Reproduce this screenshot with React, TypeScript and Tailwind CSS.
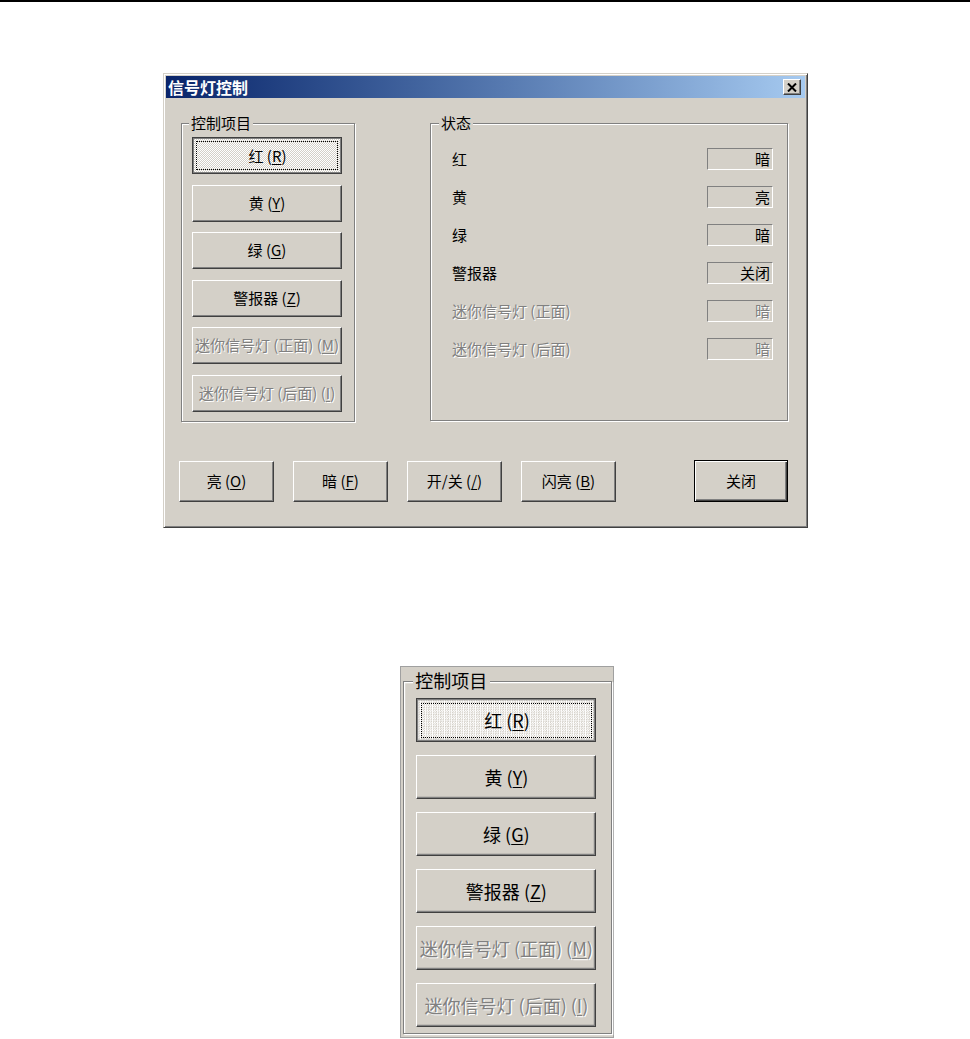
import React from 'react';

// Windows 2000 style bevels
const raised =
  'border border-t-white border-l-white border-r-[#404040] border-b-[#404040] shadow-[inset_-1px_-1px_0_#808080] bg-[#d4d0c8]';
const pressed =
  'border border-[#404040] shadow-[inset_0_0_0_1px_#808080] bg-[repeating-conic-gradient(#ffffff_0_25%,#d4d0c8_0_50%)] bg-[length:2px_2px] p-[3px]';
const defaultBtn =
  'border border-black shadow-[inset_1px_1px_0_#fff,inset_-1px_-1px_0_#404040,inset_-2px_-2px_0_#808080] bg-[#d4d0c8]';
const sunken = 'border border-t-[#808080] border-l-[#808080] border-r-white border-b-white';
const etched = 'relative border border-[#808080] shadow-[inset_1px_1px_0_#fff,1px_1px_0_#fff]';
const grayText = 'text-[#808080] [text-shadow:1px_1px_0_#fff]';

const controls = [
  { text: '红', hot: 'R', down: true },
  { text: '黄', hot: 'Y' },
  { text: '绿', hot: 'G' },
  { text: '警报器', hot: 'Z' },
  { text: '迷你信号灯 (正面)', hot: 'M', disabled: true },
  { text: '迷你信号灯 (后面)', hot: 'I', disabled: true },
];

const status = [
  { name: '红', value: '暗' },
  { name: '黄', value: '亮' },
  { name: '绿', value: '暗' },
  { name: '警报器', value: '关闭' },
  { name: '迷你信号灯 (正面)', value: '暗', disabled: true },
  { name: '迷你信号灯 (后面)', value: '暗', disabled: true },
];

const actions = [
  { text: '亮', hot: 'O' },
  { text: '暗', hot: 'F' },
  { text: '开/关', hot: '/' },
  { text: '闪亮', hot: 'B' },
];

function Label({ text, hot }: { text: string; hot?: string }) {
  return (
    <span className="whitespace-nowrap">
      {text}
      {hot && (
        <>
          {' ('}
          <span className="underline underline-offset-[2px]">{hot}</span>)
        </>
      )}
    </span>
  );
}

function ControlGroup({ height }: { height: string }) {
  return (
    <div className={`${etched} w-[174px] ${height} pt-[13px] pl-[10px]`}>
      <span className="absolute left-[7px] -top-[10px] px-[2px] bg-[#d4d0c8] leading-[18px]">控制项目</span>
      <div className="flex flex-col gap-[10.5px]">
        {controls.map((c) =>
          c.down ? (
            <div key={c.hot} className={`w-[150px] h-[37px] flex ${pressed}`}>
              <div className="flex-1 flex items-center justify-center border border-dotted border-black pt-[1px] pl-[1px]">
                <Label text={c.text} hot={c.hot} />
              </div>
            </div>
          ) : (
            <div
              key={c.hot}
              className={`w-[150px] h-[37px] flex items-center justify-center ${raised} ${c.disabled ? grayText : ''}`}
            >
              <Label text={c.text} hot={c.hot} />
            </div>
          )
        )}
      </div>
    </div>
  );
}

function StatusGroup() {
  return (
    <div className={`${etched} w-[358px] h-[298px] pt-[24px] pl-[21px] pr-[14px]`}>
      <span className="absolute left-[8px] -top-[10px] px-[2px] bg-[#d4d0c8] leading-[18px]">状态</span>
      <div className="flex flex-col gap-[16px]">
        {status.map((s) => (
          <div key={s.name} className="flex items-center justify-between h-[22px]">
            <span className={s.disabled ? grayText : ''}>{s.name}</span>
            <div className={`w-[66px] h-[22px] flex items-center justify-end pr-[2px] ${sunken}`}>
              <span className={s.disabled ? grayText : ''}>{s.value}</span>
            </div>
          </div>
        ))}
      </div>
    </div>
  );
}

function TitleBar() {
  return (
    <div className="h-[22px] flex items-center justify-between pl-[2px] pr-[4px] bg-linear-to-r from-[#0a246a] to-[#a6caf0]">
      <span className="text-white font-bold text-[16px] leading-none">信号灯控制</span>
      <div className={`w-[18px] h-[16px] flex items-center justify-center ${raised}`}>
        <svg width="10" height="9" viewBox="0 0 10 9">
          <path d="M1 0.5 L9 8.5 M9 0.5 L1 8.5" stroke="#000" strokeWidth="2" fill="none" />
        </svg>
      </div>
    </div>
  );
}

export default function App() {
  return (
    <div className="font-['Noto_Sans_CJK_SC',sans-serif] text-[15px] text-black bg-white min-h-[1039px] overflow-hidden">
      <div className="h-[2px] bg-black" />

      <div className="ml-[163px] mt-[71px] w-[645px] p-[2px] bg-[#d4d0c8] border border-t-[#d4d0c8] border-l-[#d4d0c8] border-r-[#404040] border-b-[#404040] shadow-[inset_1px_1px_0_#fff,inset_-1px_-1px_0_#808080]">
        <TitleBar />
        <div className="flex flex-col pl-[15px] pr-[17px] pb-[23px]">
          <div className="mt-[25px] flex items-start justify-between">
            <ControlGroup height="h-[299px]" />
            <StatusGroup />
          </div>
          <div className="mt-[38px] flex items-center -ml-[2px]">
            <div className="flex gap-[19px]">
              {actions.map((a) => (
                <div key={a.hot} className={`w-[95px] h-[41px] flex items-center justify-center ${raised}`}>
                  <Label text={a.text} hot={a.hot} />
                </div>
              ))}
            </div>
            <div className={`ml-auto w-[94px] h-[42px] flex items-center justify-center ${defaultBtn}`}>关闭</div>
          </div>
        </div>
      </div>

      <div className="ml-[400px] mt-[138px]">
        <div className="[zoom:1.2] w-fit bg-[#d4d0c8] border border-[#a0a0a0] pt-[12px] pl-[2px] pr-[1px] pb-[2px]">
          <ControlGroup height="h-[294px]" />
        </div>
      </div>
    </div>
  );
}
